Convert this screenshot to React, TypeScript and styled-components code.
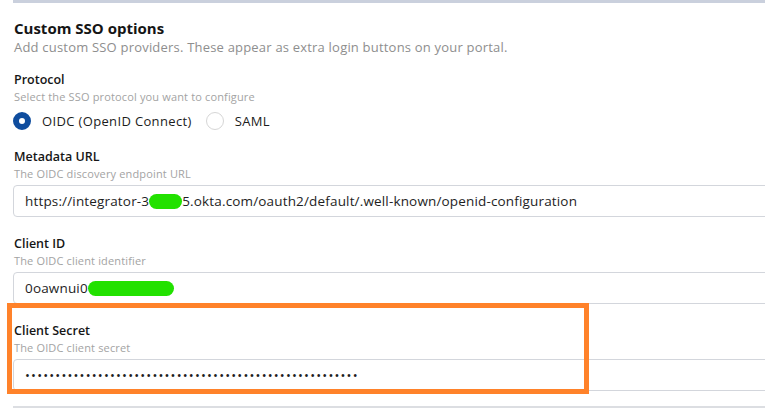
import styled, { createGlobalStyle } from "styled-components";

const GlobalStyle = createGlobalStyle`
  body {
    margin: 0;
    background: #ffffff;
    overflow: hidden;
    font-family: "Open Sans", "Noto Sans", sans-serif;
    color: #1c1c1c;
  }
`;

const Page = styled.div`
  width: 765px;
  height: 414px;
  overflow: hidden;
  padding-left: 13px;
  box-sizing: border-box;
`;

const TopRule = styled.div`
  height: 3px;
  background: #cad0dd;
  margin-right: -20px;
`;

const Section = styled.section`
  width: 820px;
  padding-top: 15px;
  display: flex;
  flex-direction: column;
`;

const Heading = styled.h2`
  margin: 0 0 0 1px;
  font-size: 15px;
  line-height: 20px;
  font-weight: 700;
  color: #151515;
`;

const Subtitle = styled.p`
  margin: 0 0 13px 1px;
  font-size: 13px;
  line-height: 19px;
  letter-spacing: 0.2px;
  color: #8e8e8e;
`;

const Field = styled.div<{ $gap?: number }>`
  display: flex;
  flex-direction: column;
  margin-bottom: ${(p) => p.$gap ?? 17}px;
`;

const Label = styled.div`
  margin-left: 1px;
  font-size: 12.5px;
  line-height: 19px;
  font-weight: 600;
  color: #161616;
`;

const Helper = styled.div`
  margin: 0 0 4px 1px;
  font-size: 11px;
  line-height: 15px;
  letter-spacing: 0.15px;
  color: #a3a3a3;
`;

const RadioRow = styled.div`
  display: flex;
  align-items: center;
  height: 20px;
  margin-top: 3px;
  gap: 10px;
`;

const RadioOption = styled.label`
  display: flex;
  align-items: center;
  gap: 11px;
  font-size: 13px;
  letter-spacing: 0.35px;
  color: #1c1c1c;
  margin-right: 4px;
`;

const RadioDot = styled.span<{ $checked?: boolean }>`
  width: 18px;
  height: 18px;
  border-radius: 50%;
  box-sizing: border-box;
  border: ${(p) => (p.$checked ? "6px solid #0f4d9e" : "1px solid #d6d6d6")};
  background: #ffffff;
`;

const InputBox = styled.div`
  height: 32px;
  box-sizing: border-box;
  border: 1px solid #d3d6dc;
  border-radius: 4px;
  padding: 0 11px;
  display: flex;
  align-items: center;
  font-size: 13.5px;
  letter-spacing: 0.16px;
  color: #1e1e1e;
  white-space: nowrap;
`;

const Redact = styled.span<{ $w: number }>`
  display: inline-block;
  width: ${(p) => p.$w}px;
  height: 15px;
  border-radius: 8px;
  background: #22e100;
  vertical-align: middle;
`;

const Dots = styled.span`
  font-size: 13px;
  letter-spacing: 1.18px;
`;

const Highlight = styled.div`
  position: relative;
`;

const Annotation = styled.div`
  position: absolute;
  left: -6px;
  top: -18px;
  width: 582px;
  height: 91px;
  box-sizing: border-box;
  border: 5px solid #ff822a;
  pointer-events: none;
`;

const Divider = styled.div`
  height: 2px;
  background: #dcdee2;
  margin-top: -2px;
`;

export default function App() {
  return (
    <>
      <GlobalStyle />
      <Page>
        <TopRule />
        <Section>
          <Heading>Custom SSO options</Heading>
          <Subtitle>
            Add custom SSO providers. These appear as extra login buttons on your portal.
          </Subtitle>

          <Field $gap={16}>
            <Label>Protocol</Label>
            <Helper>Select the SSO protocol you want to configure</Helper>
            <RadioRow>
              <RadioOption>
                <RadioDot $checked />
                OIDC (OpenID Connect)
              </RadioOption>
              <RadioOption>
                <RadioDot />
                SAML
              </RadioOption>
            </RadioRow>
          </Field>

          <Field>
            <Label>Metadata URL</Label>
            <Helper>The OIDC discovery endpoint URL</Helper>
            <InputBox>
              https://integrator-3<Redact $w={33} />5.okta.com/oauth2/default/.well-known/openid-configuration
            </InputBox>
          </Field>

          <Field>
            <Label>Client ID</Label>
            <Helper>The OIDC client identifier</Helper>
            <InputBox>
              0oawnui0<Redact $w={86} />
            </InputBox>
          </Field>

          <Highlight>
            <Field>
              <Label>Client Secret</Label>
              <Helper>The OIDC client secret</Helper>
              <InputBox>
                <Dots>{"•".repeat(55)}</Dots>
              </InputBox>
            </Field>
            <Annotation />
          </Highlight>
          <Divider />
        </Section>
      </Page>
    </>
  );
}
